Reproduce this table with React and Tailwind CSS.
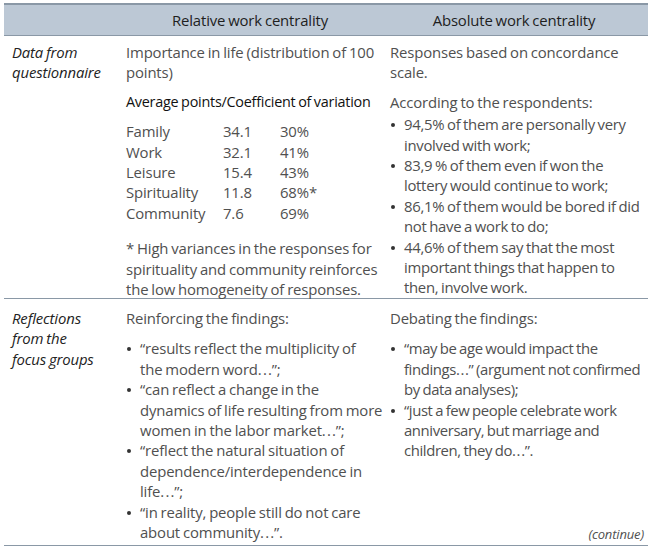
const TEXT = '#505050';
const LINE = '#8a98a6';
const DOTS = '.\u200a.\u200a.';

const stats = [
  ['Family', '34.1', '30%'],
  ['Work', '32.1', '41%'],
  ['Leisure', '15.4', '43%'],
  ['Spirituality', '11.8', '68%*'],
  ['Community', '7.6', '69%'],
];

// line breaks follow the printed table
const absolute = [
  ['94,5% of them are personally very', 'involved with work;'],
  ['83,9 % of them even if won the', 'lottery would continue to work;'],
  ['86,1% of them would be bored if did', 'not have a work to do;'],
  ['44,6% of them say that the most', 'important things that happen to', 'then, involve work.'],
];

const reinforcing = [
  ['“results reflect the multiplicity of', `the modern word${DOTS}”;`],
  ['“can reflect a change in the', 'dynamics of life resulting from more', `women in the labor market${DOTS}”;`],
  ['“reflect the natural situation of', 'dependence/interdependence in', `life${DOTS}”;`],
  ['“in reality, people still do not care', `about community${DOTS}”.`],
];

const debating = [
  ['“may be age would impact the', `findings${DOTS}” (argument not confirmed`, 'by data analyses);'],
  ['“just a few people celebrate work', 'anniversary, but marriage and', `children, they do${DOTS}”.`],
];

function Lines({ lines }) {
  return lines.map((l) => (
    <span key={l} className="block whitespace-nowrap">
      {l}
    </span>
  ));
}

function Bullets({ items, className = '' }) {
  return (
    <ul className={className}>
      {items.map((t) => (
        <li key={t[0]} className="flex">
          <span className="w-[14px] shrink-0 pt-[9px] pl-[1px]">
            <span className="block w-[4px] h-[4px] rounded-full bg-[#333]" />
          </span>
          <div>
            <Lines lines={t} />
          </div>
        </li>
      ))}
    </ul>
  );
}

export default function App() {
  return (
    <div
      className="w-[650px] h-[553px] bg-white pt-[3px] pl-[4px] pr-[2px] overflow-hidden"
      style={{ fontFamily: '"Open Sans", "Liberation Sans", sans-serif', color: TEXT }}
    >
      <div className="text-[14.9px] leading-[20.4px] tracking-[-0.15px] [word-spacing:-0.8px]">
        {/* header */}
        <div
          style={{ borderColor: LINE }}
          className="grid grid-cols-[122px_264px_1fr] h-[33px] items-center bg-[#bcc8d5] border-t-2 border-b text-[#1e1e1e]"
        >
          <div />
          <div className="text-center pr-[16px]">Relative work centrality</div>
          <div className="text-center pr-[10px]">Absolute work centrality</div>
        </div>

        {/* row 1 */}
        <div
          style={{ borderColor: LINE }}
          className="grid grid-cols-[122px_264px_1fr] pt-[6px] h-[263px] border-b"
        >
          <div className="pl-2 italic text-[#222]">
            <Lines lines={['Data from', 'questionnaire']} />
          </div>
          <div>
            <Lines lines={['Importance in life (distribution of 100', 'points)']} />
            <p className="mt-[9px] text-[#111] text-[14.4px] font-medium tracking-[-0.25px] whitespace-nowrap">
              Average points/Coefficient of variation
            </p>
            <div className="mt-[9px] grid grid-cols-[97px_57px_1fr]">
              {stats.map(([a, b, c]) => (
                <div key={a} className="contents">
                  <span>{a}</span>
                  <span>{b}</span>
                  <span>{c}</span>
                </div>
              ))}
            </div>
            <div className="mt-[15px]">
              <Lines
                lines={[
                  '* High variances in the responses for',
                  'spirituality and community reinforces',
                  'the low homogeneity of responses.',
                ]}
              />
            </div>
          </div>
          <div>
            <Lines lines={['Responses based on concordance', 'scale.']} />
            <p className="mt-[9px]">According to the respondents:</p>
            <div className="mt-[2px]">
              <Bullets items={absolute} className="tracking-[-0.3px]" />
            </div>
          </div>
        </div>

        {/* row 2 */}
        <div
          style={{ borderColor: LINE }}
          className="grid grid-cols-[122px_264px_1fr] pt-[9px] h-[247px] border-b"
        >
          <div className="pl-2 italic text-[#222]">
            <Lines lines={['Reflections', 'from the', 'focus groups']} />
          </div>
          <div>
            <p>Reinforcing the findings:</p>
            <div className="mt-[10px]">
              <Bullets items={reinforcing} />
            </div>
          </div>
          <div className="flex flex-col">
            <p>Debating the findings:</p>
            <div className="mt-[10px]">
              <Bullets items={debating} className="tracking-[-0.4px]" />
            </div>
            <p className="mt-auto mb-[1px] text-right italic text-[13px] pr-[4px]">(continue)</p>
          </div>
        </div>
      </div>
    </div>
  );
}
